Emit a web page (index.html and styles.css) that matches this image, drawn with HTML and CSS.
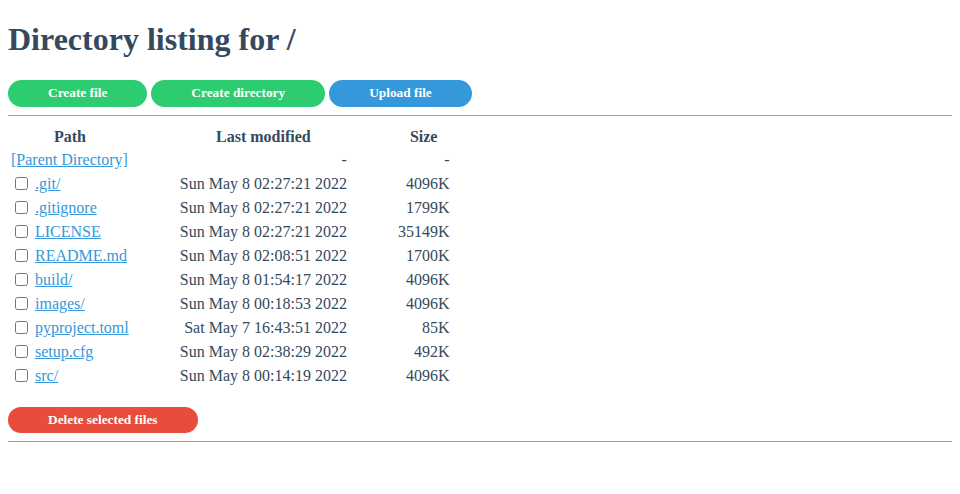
FILE: index.html
```html
<!DOCTYPE html>
<html>
<head>
<meta charset="utf-8">
<title>Directory listing for /</title>
<link rel="stylesheet" href="styles.css">
</head>
<body>
<h1 class="title">Directory listing for /</h1>
<div class="actions">
  <button class="btn btn-green">Create file</button>
  <button class="btn btn-green">Create directory</button>
  <button class="btn btn-blue">Upload file</button>
</div>
<hr class="rule">
<table class="listing">
  <thead>
    <tr><th class="c-path">Path</th><th class="c-date">Last modified</th><th class="c-size">Size</th></tr>
  </thead>
  <tbody>
    <tr class="parent"><td class="c-path"><a href="#">[Parent Directory]</a></td><td class="c-date">-</td><td class="c-size">-</td></tr>
    <tr><td class="c-path"><input type="checkbox" class="cb"><a href="#">.git/</a></td><td class="c-date">Sun May 8 02:27:21 2022</td><td class="c-size">4096K</td></tr>
    <tr><td class="c-path"><input type="checkbox" class="cb"><a href="#">.gitignore</a></td><td class="c-date">Sun May 8 02:27:21 2022</td><td class="c-size">1799K</td></tr>
    <tr><td class="c-path"><input type="checkbox" class="cb"><a href="#">LICENSE</a></td><td class="c-date">Sun May 8 02:27:21 2022</td><td class="c-size">35149K</td></tr>
    <tr><td class="c-path"><input type="checkbox" class="cb"><a href="#">README.md</a></td><td class="c-date">Sun May 8 02:08:51 2022</td><td class="c-size">1700K</td></tr>
    <tr><td class="c-path"><input type="checkbox" class="cb"><a href="#">build/</a></td><td class="c-date">Sun May 8 01:54:17 2022</td><td class="c-size">4096K</td></tr>
    <tr><td class="c-path"><input type="checkbox" class="cb"><a href="#">images/</a></td><td class="c-date">Sun May 8 00:18:53 2022</td><td class="c-size">4096K</td></tr>
    <tr><td class="c-path"><input type="checkbox" class="cb"><a href="#">pyproject.toml</a></td><td class="c-date">Sat May 7 16:43:51 2022</td><td class="c-size">85K</td></tr>
    <tr><td class="c-path"><input type="checkbox" class="cb"><a href="#">setup.cfg</a></td><td class="c-date">Sun May 8 02:38:29 2022</td><td class="c-size">492K</td></tr>
    <tr><td class="c-path"><input type="checkbox" class="cb"><a href="#">src/</a></td><td class="c-date">Sun May 8 00:14:19 2022</td><td class="c-size">4096K</td></tr>
  </tbody>
</table>
<div class="actions actions-bottom">
  <button class="btn btn-red">Delete selected files</button>
</div>
<hr class="rule">
</body>
</html>
```
FILE: styles.css
```css
html, body {
  background: #ffffff;
}
body {
  margin: 8px;
  font-family: "Liberation Serif", "Times New Roman", serif;
  font-size: 16px;
  color: #34495e;
}
.title {
  font-size: 32px;
  font-weight: bold;
  line-height: 37px;
  margin: 13px 0 22px;
  color: #34495e;
}
.actions {
  display: flex;
  gap: 4px;
}
.btn {
  font-family: "Liberation Serif", "Times New Roman", serif;
  font-size: 13.333px;
  font-weight: bold;
  color: #ffffff;
  border: none;
  border-radius: 14px;
  height: 27px;
  padding: 0 40px 1px;
  line-height: 26px;
}
.btn-green { background: #2ecc71; }
.btn-blue { background: #3498db; }
.btn-red { background: #e74c3c; height: 26px; line-height: 25px; }
.rule {
  border: none;
  border-top: 1px solid #95a5a6;
  height: 0;
  margin: 8px 0;
}
.listing {
  border-collapse: separate;
  border-spacing: 2px 0;
  margin-top: 9px;
}
.listing th, .listing td {
  padding: 0 1px;
  height: 24px;
  line-height: 18px;
  vertical-align: middle;
  white-space: nowrap;
}
.listing th {
  font-weight: bold;
  text-align: center;
  height: 23px;
}
.listing td.c-date, .listing td.c-size {
  text-align: right;
}
.listing .c-date, .listing .c-size {
  padding-left: 48px;
}
.listing a {
  color: #3498db;
  text-decoration: underline;
}
.cb {
  width: 13px;
  height: 13px;
  margin: 0 7px 0 4px;
  vertical-align: -1px;
}
.actions-bottom {
  margin-top: 19px;
}
```
